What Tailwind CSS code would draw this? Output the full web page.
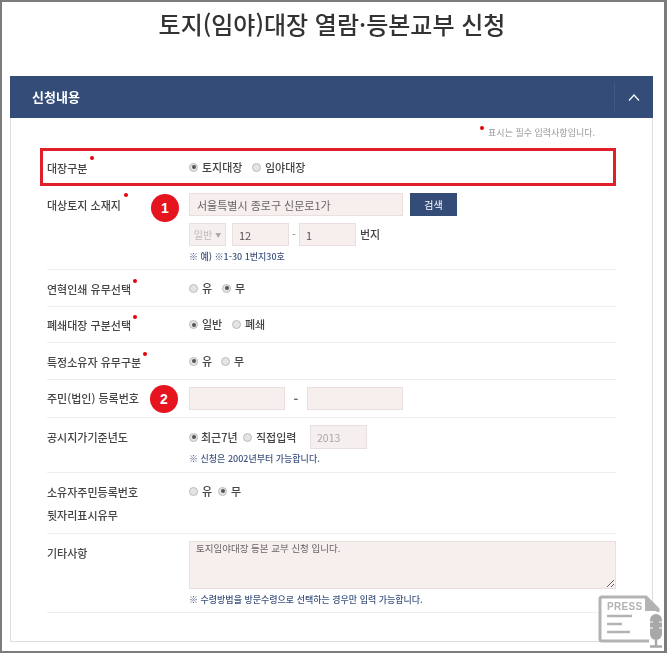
<!DOCTYPE html>
<html lang="ko">

<head>
    <meta charset="UTF-8">
    <meta name="viewport" content="width=device-width, initial-scale=1.0">
    <title>토지(임야)대장 열람·등본교부 신청</title>
    <script src="https://cdn.jsdelivr.net/npm/@tailwindcss/browser@4"></script>
</head>

<body class="bg-white">
    <div class="relative w-[667px] h-[653px] overflow-hidden border-t-2 border-l-2 border-r-[3px] border-b-2 border-[#7b7b7b] font-['Noto_Sans_CJK_KR',sans-serif] text-[11px] text-[#444] blur-[0.4px]">
        <h1 class="h-[74px] pt-[5px] pr-[2px] text-center text-[24px] leading-[34px] font-medium text-[#333]">토지(임야)대장 열람·등본교부 신청</h1>

        <section class="ml-[8px] w-[643px] h-[566px] border border-[#ddd]">
            <div class="flex items-center justify-between h-[42px] -mt-px -mx-px bg-[#334c78] text-white">
                <span class="pl-[22px] text-[13px] font-bold">신청내용</span>
                <div class="flex items-center justify-center w-[39px] h-[28px] border-l border-[#41598a]">
                    <svg width="12" height="7" viewBox="0 0 12 7" fill="none" stroke="#fff" stroke-width="1.2"><path d="M1 6.5 6 1l5 5.5"/></svg>
                </div>
            </div>

            <p class="h-[30px] pt-[7px] pr-[57px] text-right text-[9px] leading-[16px] text-[#999]"><span class="inline-block size-[4px] rounded-full bg-red-600 mr-[4px] align-[6px]"></span>표시는 필수 입력사항입니다.</p>

            <div class="ml-[29px] w-[576px] h-[38px] flex items-center pl-[4px] border-[3px] border-[#e01f2b]">
                <span class="w-[142px] -mt-[2px] font-medium">대장구분<span class="inline-block size-[4px] rounded-full bg-red-600 ml-[3px] align-[13px]"></span></span>
                <div class="flex items-center">
                    <span class="flex items-center justify-center size-[9px] rounded-full bg-[#e4e4e4] border border-[#bbb]"><span class="size-[4px] rounded-full bg-[#555]"></span></span>
                    <span class="ml-[4px] w-[46px] whitespace-nowrap font-medium">토지대장</span>
                    <span class="ml-[4px] size-[9px] rounded-full bg-[#e4e4e4] border border-[#bbb]"></span>
                    <span class="ml-[4px] whitespace-nowrap font-medium">임야대장</span>
                </div>
            </div>

            <div class="ml-[36px] w-[569px]">
                <div class="relative flex h-[84px] pt-[7px] border-b border-[#eee]">
                    <span class="w-[142px] font-medium">대상토지 소재지<span class="inline-block size-[4px] rounded-full bg-red-600 ml-[3px] align-[13px]"></span></span>
                    <div>
                        <div class="flex gap-[7px]">
                            <input value="서울특별시 종로구 신문로1가" class="w-[214px] h-[23px] px-[7px] bg-[#f7eeee] border border-[#eadfdf] text-[11px] text-[#666]">
                            <button class="w-[47px] h-[23px] bg-[#334c78] text-white text-[10px]">검색</button>
                        </div>
                        <div class="flex items-center mt-[7px]">
                            <div class="flex items-center justify-center gap-[3px] w-[37px] h-[23px] bg-[#f6efef] border border-[#e8e0e0] text-[10px] text-[#bbb]">일반<span class="text-[6px] text-[#aaa]">▼</span></div>
                            <input value="12" class="ml-[6px] w-[57px] h-[23px] px-[6px] bg-[#f7eeee] border border-[#eadfdf] text-[11px] text-[#555]">
                            <span class="w-[10px] text-center text-[#888]">-</span>
                            <input value="1" class="w-[57px] h-[23px] px-[6px] bg-[#f7eeee] border border-[#eadfdf] text-[11px] text-[#555]">
                            <span class="ml-[4px] font-medium">번지</span>
                        </div>
                        <p class="mt-[5px] text-[9px] leading-[12px] font-medium text-[#3d5480]">※ 예) ※1-30 1번지30호</p>
                    </div>
                    <span class="absolute left-[104px] top-[8px] flex items-center justify-center size-[28px] rounded-full bg-[#e5141f] text-white text-[14px] font-bold font-['Liberation_Sans',sans-serif]">1</span>
                </div>

                <div class="flex items-center h-[37px] border-b border-[#eee]">
                    <span class="w-[142px] font-medium">연혁인쇄 유무선택<span class="inline-block size-[4px] rounded-full bg-red-600 ml-[2px] align-[11px]"></span></span>
                    <span class="size-[9px] rounded-full bg-[#e4e4e4] border border-[#bbb]"></span>
                    <span class="ml-[4px] w-[20px] font-medium">유</span>
                    <span class="flex items-center justify-center size-[9px] rounded-full bg-[#e4e4e4] border border-[#bbb]"><span class="size-[4px] rounded-full bg-[#555]"></span></span>
                    <span class="ml-[4px] font-medium">무</span>
                </div>

                <div class="flex items-center h-[36px] border-b border-[#eee]">
                    <span class="w-[142px] font-medium">폐쇄대장 구분선택<span class="inline-block size-[4px] rounded-full bg-red-600 ml-[2px] align-[11px]"></span></span>
                    <span class="flex items-center justify-center size-[9px] rounded-full bg-[#e4e4e4] border border-[#bbb]"><span class="size-[4px] rounded-full bg-[#555]"></span></span>
                    <span class="ml-[4px] w-[30px] font-medium">일반</span>
                    <span class="size-[9px] rounded-full bg-[#e4e4e4] border border-[#bbb]"></span>
                    <span class="ml-[4px] font-medium">폐쇄</span>
                </div>

                <div class="flex items-center h-[37px] border-b border-[#eee]">
                    <span class="w-[142px] font-medium">특정소유자 유무구분<span class="inline-block size-[4px] rounded-full bg-red-600 ml-[2px] align-[11px]"></span></span>
                    <span class="flex items-center justify-center size-[9px] rounded-full bg-[#e4e4e4] border border-[#bbb]"><span class="size-[4px] rounded-full bg-[#555]"></span></span>
                    <span class="ml-[4px] w-[19px] font-medium">유</span>
                    <span class="size-[9px] rounded-full bg-[#e4e4e4] border border-[#bbb]"></span>
                    <span class="ml-[4px] font-medium">무</span>
                </div>

                <div class="relative flex items-center h-[38px] border-b border-[#eee]">
                    <span class="w-[142px] font-medium">주민(법인) 등록번호</span>
                    <input class="w-[96px] h-[23px] bg-[#f7eeee] border border-[#eadfdf]">
                    <span class="w-[22px] text-center text-[13px] font-bold text-[#666]">-</span>
                    <input class="w-[96px] h-[23px] bg-[#f7eeee] border border-[#eadfdf]">
                    <span class="absolute left-[103px] top-[5px] flex items-center justify-center size-[28px] rounded-full bg-[#e5141f] text-white text-[14px] font-bold font-['Liberation_Sans',sans-serif]">2</span>
                </div>

                <div class="flex h-[55px] pt-[7px] border-b border-[#eee]">
                    <span class="w-[142px] mt-[4px] font-medium">공시지가기준년도</span>
                    <div>
                        <div class="flex items-center">
                            <span class="flex items-center justify-center size-[9px] rounded-full bg-[#e4e4e4] border border-[#bbb]"><span class="size-[4px] rounded-full bg-[#555]"></span></span>
                            <span class="ml-[3px] w-[42px] font-medium">최근7년</span>
                            <span class="size-[9px] rounded-full bg-[#e4e4e4] border border-[#bbb]"></span>
                            <span class="ml-[4px] w-[54px] font-medium">직접입력</span>
                            <input value="2013" disabled class="w-[57px] h-[24px] px-[6px] bg-[#f6efef] border border-[#e8e0e0] text-[10.5px] text-[#aaa]">
                        </div>
                        <p class="mt-[3px] text-[9px] leading-[14px] font-medium text-[#3d5480]">※ 신청은 2002년부터 가능합니다.</p>
                    </div>
                </div>

                <div class="flex h-[61px] pt-[8px] border-b border-[#eee]">
                    <p class="w-[142px] leading-[23px] font-medium">소유자주민등록번호<br>뒷자리표시유무</p>
                    <div class="flex items-center h-[20px]">
                        <span class="size-[9px] rounded-full bg-[#e4e4e4] border border-[#bbb]"></span>
                        <span class="ml-[4px] w-[16px] font-medium">유</span>
                        <span class="flex items-center justify-center size-[9px] rounded-full bg-[#e4e4e4] border border-[#bbb]"><span class="size-[4px] rounded-full bg-[#555]"></span></span>
                        <span class="ml-[4px] font-medium">무</span>
                    </div>
                </div>

                <div class="flex h-[79px] pt-[7px] border-b border-[#eee]">
                    <span class="w-[142px] mt-[4px] font-medium">기타사항</span>
                    <div>
                        <textarea readonly class="block w-[427px] h-[48px] px-[6px] bg-[#f7eeee] border border-[#eadfdf] text-[9.5px] leading-[12px] text-[#666]">토지임야대장 등본 교부 신청 입니다.</textarea>
                        <p class="mt-[4px] text-[9px] leading-[14px] font-medium text-[#3d5480]">※ 수령방법을 방문수령으로 선택하는 경우만 입력 가능합니다.</p>
                    </div>
                </div>
            </div>
        </section>

        <svg class="absolute left-[596px] top-[593px]" width="66" height="54" viewBox="0 0 66 54" fill="none">
            <path d="M2 4a2 2 0 0 1 2-2h44l12 12v32H4a2 2 0 0 1-2-2z" fill="#fff" stroke="#b3b3b3" stroke-width="3"/>
            <path d="M47 2l14 14H47z" fill="#b3b3b3"/>
            <text x="9" y="15" font-size="10" font-weight="700" letter-spacing=".3" fill="#b3b3b3" font-family="Liberation Sans">PRESS</text>
            <path d="M9 21h25M9 29h15M9 37h23" stroke="#b3b3b3" stroke-width="2.5"/>
            <rect x="51" y="17" width="15" height="37" fill="#fff"/>
            <rect x="52" y="19" width="12" height="26" rx="6" fill="#a8a8a8"/>
            <path d="M52 27h3M61 27h3M52 33h3M61 33h3" stroke="#fff"/>
            <path d="M58 45v6M52 51.500h12" stroke="#a8a8a8" stroke-width="2.500"/>
        </svg>
    </div>
</body>

</html>
